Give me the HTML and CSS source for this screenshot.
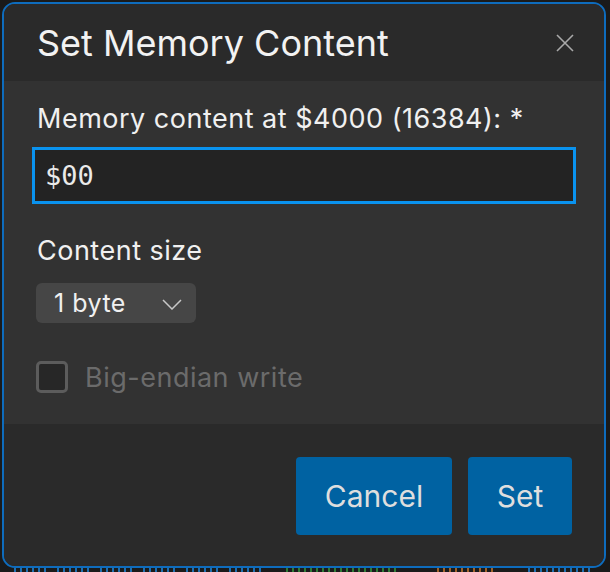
FILE: index.html
```html
<!DOCTYPE html>
<html lang="en">
<head>
<meta charset="utf-8">
<title>Set Memory Content</title>
<link rel="stylesheet" href="styles.css">
</head>
<body>
<div class="page">
  <div class="dialog">
    <header class="dlg-head">
      <h1 class="dlg-title">Set Memory Content</h1>
      <button class="close" aria-label="Close">
        <svg width="18" height="18" viewBox="0 0 18 18"><path d="M1 1 L17 17 M17 1 L1 17" stroke="#a9a9a9" stroke-width="1.6" fill="none"/></svg>
      </button>
    </header>
    <section class="dlg-body">
      <label class="field-label">Memory content at $4000 (16384): *</label>
      <div class="text-input">$00</div>
      <div class="field-label size-label">Content size</div>
      <div class="select">
        <span class="select-value">1 byte</span>
        <svg class="chev" width="20" height="11" viewBox="0 0 20 11"><path d="M1 1 L10 10 L19 1" stroke="#c8c8c8" stroke-width="1.5" fill="none"/></svg>
      </div>
      <div class="check">
        <span class="box"></span>
        <span class="check-label">Big-endian write</span>
      </div>
    </section>
    <footer class="dlg-foot">
      <button class="btn">Cancel</button>
      <button class="btn btn-set">Set</button>
    </footer>
  </div>
  <div class="bg-row">
    <span class="frag blue w32"></span><span class="frag blue w32"></span><span class="frag blue w32"></span><span class="frag blue w32"></span><span class="frag blue w32"></span><span class="frag blue w32"></span>
    <span class="frag green w110"></span><span class="frag orange w60"></span><span class="frag blue w62"></span>
  </div>
</div>
</body>
</html>
```
FILE: styles.css
```css
html, body {
  margin: 0;
  padding: 0;
  background: #1a1a1a;
}
body {
  width: 610px;
  height: 572px;
  overflow: hidden;
  font-family: Inter, "Noto Sans", sans-serif;
}
.page {
  padding: 2px 0 0 2px;
}
.dialog {
  box-sizing: border-box;
  width: 604px;
  height: 566px;
  border: 2px solid #0e6cbd;
  border-radius: 13px;
  overflow: hidden;
  background: #2a2a2a;
  display: flex;
  flex-direction: column;
}
.dlg-head {
  height: 77px;
  box-sizing: border-box;
  padding: 17px 0 0 33px;
  display: flex;
  justify-content: space-between;
  align-items: flex-start;
  background: #2a2a2a;
}
.dlg-title {
  margin: 0;
  font-size: 36px;
  line-height: 44px;
  font-weight: 400;
  color: #f2f2f2;
}
.close {
  margin: 13px 30px 0 0;
  padding: 0;
  width: 18px;
  height: 18px;
  border: 0;
  background: none;
  display: flex;
}
.dlg-body {
  height: 343px;
  box-sizing: border-box;
  background: #323232;
  padding: 23px 28px 0 28px;
  display: flex;
  flex-direction: column;
  align-items: flex-start;
}
.field-label {
  display: block;
  margin-left: 5px;
  font-size: 27px;
  letter-spacing: 0.5px;
  line-height: 30px;
  color: #f0f0f0;
}
.text-input {
  margin-top: 13px;
  box-sizing: border-box;
  width: 544px;
  height: 57px;
  border: 3px solid #0a93ef;
  background: #232323;
  padding-left: 10px;
  font-family: "DejaVu Sans Mono", monospace;
  font-size: 27px;
  line-height: 51px;
  color: #eaeaea;
}
.size-label {
  margin-top: 32px;
}
.select {
  margin-top: 17px;
  margin-left: 4px;
  box-sizing: border-box;
  width: 160px;
  height: 40px;
  border-radius: 6px;
  background: #464646;
  padding: 0 14px 0 18px;
  display: flex;
  align-items: center;
  justify-content: space-between;
}
.select-value {
  font-size: 25px;
  letter-spacing: 0.5px;
  color: #f0f0f0;
  line-height: 30px;
}
.chev {
  margin-top: 2px;
}
.check {
  margin-top: 36px;
  margin-left: 4px;
  display: flex;
  align-items: center;
  gap: 17px;
}
.box {
  box-sizing: border-box;
  width: 32px;
  height: 32px;
  border: 3px solid #5c5c5c;
  border-radius: 5px;
  background: #272727;
}
.check-label {
  padding-top: 3px;
  font-size: 27px;
  letter-spacing: 0.5px;
  line-height: 32px;
  color: #6b6b6b;
}
.dlg-foot {
  flex: 1;
  background: #2a2a2a;
  padding: 33px 32px 0 0;
  display: flex;
  justify-content: flex-end;
  align-items: flex-start;
  gap: 16px;
}
.btn {
  height: 78px;
  width: 156px;
  border: 0;
  border-radius: 4px;
  background: #0062a2;
  color: #dedede;
  font-family: Inter, "Noto Sans", sans-serif;
  font-size: 30px;
  padding: 0;
}
.btn-set {
  width: 104px;
}
.bg-row {
  display: flex;
  gap: 11px;
  padding-left: 12px;
  height: 4px;
}
.frag {
  height: 4px;
  background: repeating-linear-gradient(90deg, currentColor 0 2px, transparent 2px 6px);
}
.blue { color: #1f6fb0; }
.green { color: #2f7a35; margin-left: 14px; }
.orange { color: #a0622a; margin-left: 30px; }
.w32 { width: 32px; }
.w110 { width: 110px; }
.w60 { width: 60px; }
.w62 { width: 62px; margin-left: 20px; }
```
